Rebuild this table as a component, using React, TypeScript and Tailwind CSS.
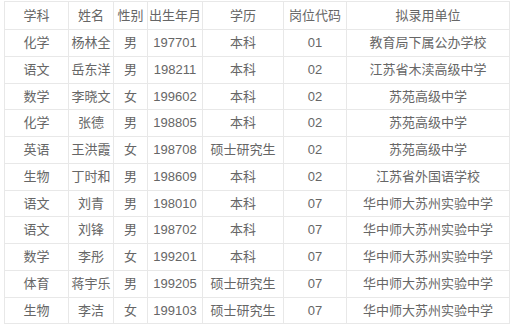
const rows: string[][] = [
  ["化学", "杨林全", "男", "197701", "本科", "01", "教育局下属公办学校"],
  ["语文", "岳东洋", "男", "198211", "本科", "02", "江苏省木渎高级中学"],
  ["数学", "李晓文", "女", "199602", "本科", "02", "苏苑高级中学"],
  ["化学", "张德", "男", "198805", "本科", "02", "苏苑高级中学"],
  ["英语", "王洪霞", "女", "198708", "硕士研究生", "02", "苏苑高级中学"],
  ["生物", "丁时和", "男", "198609", "本科", "02", "江苏省外国语学校"],
  ["语文", "刘青", "男", "198010", "本科", "07", "华中师大苏州实验中学"],
  ["语文", "刘锋", "男", "198702", "本科", "07", "华中师大苏州实验中学"],
  ["数学", "李彤", "女", "199201", "本科", "07", "华中师大苏州实验中学"],
  ["体育", "蒋宇乐", "男", "199205", "硕士研究生", "07", "华中师大苏州实验中学"],
  ["生物", "李洁", "女", "199103", "硕士研究生", "07", "华中师大苏州实验中学"],
];

const headers = ["学科", "姓名", "性别", "出生年月", "学历", "岗位代码", "拟录用单位"];
const widths = [64, 45, 34, 55, 81, 63, 163];

export default function App() {
  return (
    <div className="h-[328px] w-[517px] bg-white pl-[4px] pt-[1px] font-['Liberation_Sans','Noto_Sans_CJK_SC',sans-serif] text-[13px] text-[#666]">
      <table className="table-fixed border-collapse">
        <colgroup>
          {widths.map((w, i) => (
            <col key={i} style={{ width: w }} />
          ))}
        </colgroup>
        <thead>
          <tr className="h-[28px]">
            {headers.map((h) => (
              <td key={h} className="border border-[#e8e8e8] p-0 text-center font-normal whitespace-nowrap">
                {h}
              </td>
            ))}
          </tr>
        </thead>
        <tbody>
          {rows.map((r, i) => (
            <tr key={i} className="h-[26.75px]">
              {r.map((c, j) => (
                <td key={j} className="border border-[#e8e8e8] p-0 text-center whitespace-nowrap">
                  {c}
                </td>
              ))}
            </tr>
          ))}
        </tbody>
      </table>
    </div>
  );
}
